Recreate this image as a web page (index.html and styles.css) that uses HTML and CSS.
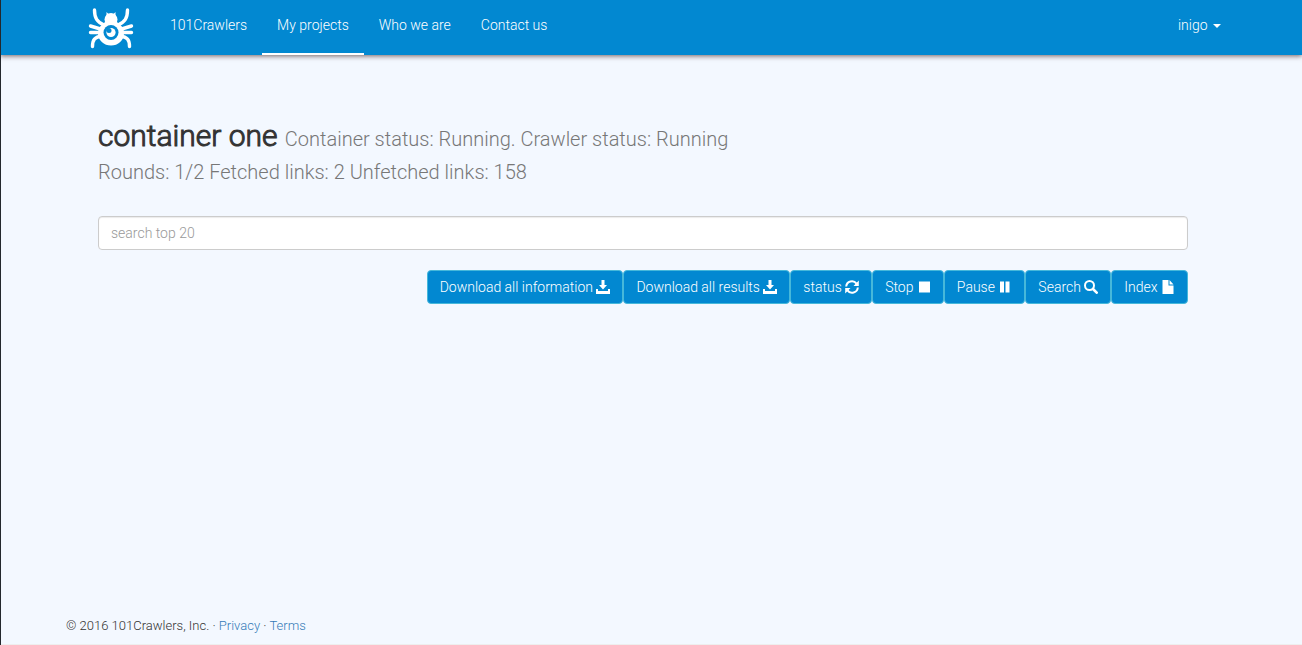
FILE: index.html
```html
<!DOCTYPE html>
<html lang="en">
<head>
<meta charset="utf-8">
<title>101Crawlers - container one</title>
<link rel="stylesheet" href="styles.css">
</head>
<body>
<header class="navbar">
  <div class="container navbar-inner">
    <a class="brand" href="#" aria-label="101Crawlers home">
      <svg class="logo" viewBox="0 0 46 42" aria-hidden="true">
        <g fill="none" stroke="#fff" stroke-width="3.4" stroke-linecap="round">
          <path d="M6.500 3C6.500 11 9 15 16 18"/>
          <path d="M39.500 3C39.500 11 37 15 30 18"/>
          <path d="M2.500 19L14 22.500M2.500 25.500H14M4.500 39.500C4.500 33 6.500 30 14 29"/>
          <path d="M43.500 19L32 22.500M43.500 25.500H32M41.500 39.500C41.500 33 39.500 30 32 29"/>
        </g>
        <circle cx="23" cy="12.500" r="6.500" fill="#fff"/>
        <path fill="#fff" d="M18.500 5l3 3-3 2zM27.500 5l-3 3 3 2zM17 15h12l6 6v9H11v-9z"/>
        <ellipse cx="23" cy="26.500" rx="13" ry="12" fill="#fff"/>
        <circle cx="23" cy="25.500" r="7.500" fill="#0288d1"/>
        <circle cx="23" cy="25.500" r="4.600" fill="#fff"/>
        <circle cx="21" cy="23.500" r="2.500" fill="#0288d1"/>
      </svg>
    </a>
    <nav class="nav">
      <a class="nav-link" href="#">101Crawlers</a>
      <a class="nav-link active" href="#" aria-current="page">My projects</a>
      <a class="nav-link" href="#">Who we are</a>
      <a class="nav-link" href="#">Contact us</a>
    </nav>
    <button class="nav-link user-menu" type="button" aria-haspopup="true">inigo <span class="caret"></span></button>
  </div>
</header>

<main class="container content">
  <h1 class="title"><span class="name">container one</span> <small>Container status: Running. Crawler status: Running<br>Rounds: 1/2 Fetched links: 2 Unfetched links: 158</small></h1>
  <input class="search" type="text" placeholder="search top 20" aria-label="search top 20">
  <div class="actions">
    <button class="btn" type="button">Download all information <svg class="icon" viewBox="0 0 14 14" aria-hidden="true"><path d="M5.500 0h3v5H11L7 9.500 3 5h2.500zM0 9h2v2h10V9h2v5H0z"/></svg></button>
    <button class="btn" type="button">Download all results <svg class="icon" viewBox="0 0 14 14" aria-hidden="true"><path d="M5.500 0h3v5H11L7 9.500 3 5h2.500zM0 9h2v2h10V9h2v5H0z"/></svg></button>
    <button class="btn" type="button">status <svg class="icon" viewBox="0 0 14 14" aria-hidden="true"><path fill="none" stroke="currentColor" stroke-width="2" d="M1.200 6.500A5.700 5.700 0 0 1 11.500 3.600M12.800 7.500A5.700 5.700 0 0 1 2.500 10.400"/><path d="M13.800.5V6H8.500zM.2 13.500V8h5.300z"/></svg></button>
    <button class="btn" type="button">Stop <svg class="icon" viewBox="0 0 14 14" aria-hidden="true"><path d="M2 1.500h11v11H2z"/></svg></button>
    <button class="btn" type="button">Pause <svg class="icon" viewBox="0 0 14 14" aria-hidden="true"><path d="M2 1.500h4v11H2zM7.500 1.500h4v11h-4z"/></svg></button>
    <button class="btn" type="button">Search <svg class="icon" viewBox="0 0 14 14" aria-hidden="true"><g fill="none" stroke="currentColor"><circle cx="5.500" cy="5.500" r="4.500" stroke-width="2"/><path stroke-width="2.600" stroke-linecap="round" d="M9 9l3.700 3.700"/></g></svg></button>
    <button class="btn" type="button">Index <svg class="icon" viewBox="0 0 14 14" aria-hidden="true"><path d="M1.500 0h6v5.500h5V14h-11zM8.500 0l4 4.500h-4z"/></svg></button>
  </div>
</main>

<footer class="container footer">© 2016 101Crawlers, Inc. · <a href="#">Privacy</a> · <a href="#">Terms</a></footer>
</body>
</html>
```
FILE: styles.css
```css
* {
  box-sizing: border-box;
}

body {
  display: flex;
  flex-direction: column;
  min-height: 100vh;
  margin: 0;
  border-bottom: 1px solid #eee;
  background: #f3f8ff;
  color: #333;
  font: 300 14px/20px Roboto, "Liberation Sans", sans-serif;
}

/* Thin dark edge over the left side of the whole window */
body::before {
  content: "";
  position: fixed;
  top: 0;
  bottom: 0;
  left: 0;
  z-index: 1;
  width: 1px;
  background: #23282d;
}

.container {
  width: 100%;
  max-width: 1170px;
  margin: 0 auto;
}

.navbar {
  background: #0288d1;
  box-shadow: 0 1px 5px rgba(60, 30, 30, 0.7);
}

.navbar-inner {
  display: flex;
  align-items: stretch;
}

.brand {
  padding: 7px 21px 0 22px;
}

.logo {
  display: block;
  width: 46px;
  height: 42px;
}

.nav {
  display: flex;
  flex: 1;
}

.nav-link {
  padding: 15px 15px 18px;
  border: 0;
  border-bottom: 2px solid transparent;
  background: none;
  color: #fff;
  font: inherit;
  text-decoration: none;
}

.nav-link.active {
  border-bottom-color: #fff;
}

.caret {
  display: inline-block;
  margin-left: 2px;
  border: 4px solid transparent;
  border-top-color: #fff;
  border-bottom: 0;
  vertical-align: middle;
}

.content {
  flex: 1;
  padding: 64px 48px 0 32px;
}

.title {
  margin: 0 0 31px;
  font-size: 30px;
  font-weight: 300;
  line-height: 33px;
}

.name {
  -webkit-text-stroke: 1px #333;
}

.title small {
  color: #777;
  font-size: 20px;
  line-height: 20px;
}

.search {
  display: block;
  width: 100%;
  height: 34px;
  padding: 6px 12px;
  border: 1px solid #ccc;
  border-radius: 4px;
  background: #fff;
  box-shadow: inset 0 1px 1px rgba(0, 0, 0, 0.08);
  color: #555;
  font: inherit;
}

.search::placeholder {
  color: #999;
}

.actions {
  display: flex;
  flex-wrap: wrap;
  justify-content: flex-end;
  margin-top: 20px;
}

.btn {
  padding: 6px 12px;
  border: 1px solid #46b8da;
  border-radius: 4px;
  background: #0288d1;
  color: #fff;
  font: inherit;
}

.icon {
  width: 14px;
  height: 14px;
  fill: currentColor;
  vertical-align: -2px;
}

.footer {
  padding-bottom: 8px;
  font-size: 13px;
}

.footer a {
  color: #337ab7;
  text-decoration: none;
}
```
